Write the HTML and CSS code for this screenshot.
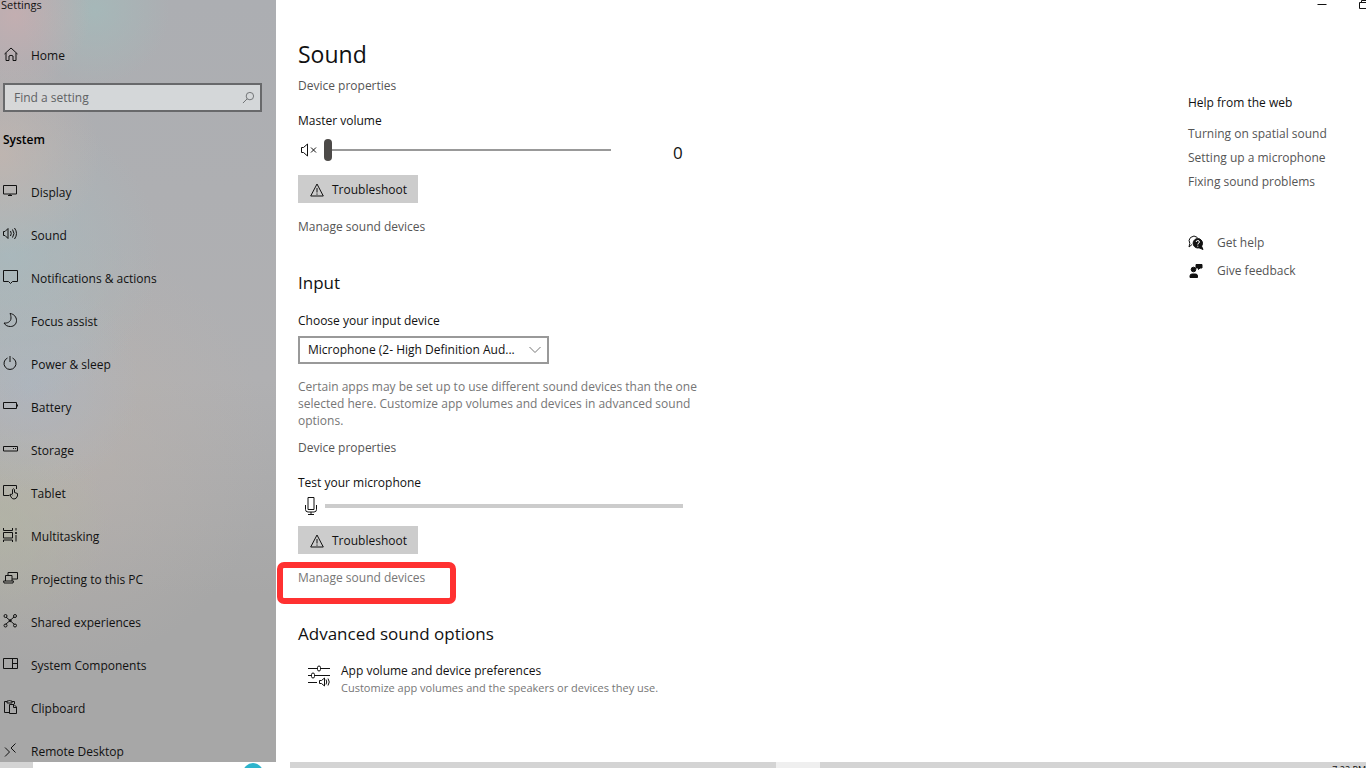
FILE: index.html
```
<!doctype html>
<html lang="en">
<head>
<meta charset="utf-8">
<meta name="viewport" content="width=device-width, initial-scale=1">
<title>Settings</title>
<link rel="stylesheet" href="styles.css">
</head>

<body>
<div class="window">
	<div class="sidebar">
		<div class="app-title">Settings</div>
		<a class="nav-item home" href="#">
			<svg class="icon" viewBox="0 0 16 16"><path d="M2.500 8 9 2l6.500 6M4 7v7.500h3V10q2-1.500 4 0v4.500h3V7"/></svg>
			Home
		</a>
		<div class="search">
			<input type="text" id="search" placeholder="Find a setting" aria-label="Find a setting">
			<svg class="search-icon" viewBox="0 0 14 14"><circle cx="8.500" cy="5.500" r="4"/><path d="M5.500 8.500 1 13"/></svg>
		</div>
		<h2 class="group">System</h2>
		<nav>
			<a class="nav-item" href="#">
				<svg class="icon" viewBox="0 0 16 16"><path d="M1.500 2.500h13v8.500h-13zM8 11v2M6 12.500h4"/></svg>
				Display
			</a>
			<a class="nav-item" href="#">
				<svg class="icon" viewBox="0 0 16 16"><path d="M1.500 5.500H3L6 2.500v10L3 9.500H1.500zM8.500 5q1.500 2.500 0 5M10.500 3.500q3 4 0 8M12.500 2q4 5.500 0 11"/></svg>
				Sound
			</a>
			<a class="nav-item" href="#">
				<svg class="icon" viewBox="0 0 16 16"><path d="M1.500 1.500h14v11h-5L8.500 14.500l-2-2h-5z"/></svg>
				Notifications &amp; actions
			</a>
			<a class="nav-item" href="#">
				<svg class="icon" viewBox="0 0 16 16"><path d="M8 1.500C12 2 14.500 5 14.500 8.500c0 3.500-2.500 6-6 6-3 0-5-1-6.500-3.500 3 .5 7-1 7-5 0-2-.5-3.500-1-4.500z"/></svg>
				Focus assist
			</a>
			<a class="nav-item" href="#">
				<svg class="icon" viewBox="0 0 16 16"><path d="M8 1v6M5.500 3a6 6 0 1 0 5 0"/></svg>
				Power &amp; sleep
			</a>
			<a class="nav-item" href="#">
				<svg class="icon" viewBox="0 0 16 16"><path d="M1.500 4.500h13v6h-13zM15.500 6.500v2"/></svg>
				Battery
			</a>
			<a class="nav-item" href="#">
				<svg class="icon" viewBox="0 0 16 16"><path d="M1.500 5.500h14v4.500h-14zM11 7.500h1M13 7.500h1"/></svg>
				Storage
			</a>
			<a class="nav-item" href="#">
				<svg class="icon" viewBox="0 0 16 16"><path d="M7.500 11.500h-6v-10h13V5M10.500 10V5.500q1-1.500 2 0V8.500l3 1v2.500q-1 3-3.500 3-2 0-3-2L8 10.500q1-1 2.500.5"/></svg>
				Tablet
			</a>
			<a class="nav-item" href="#">
				<svg class="icon" viewBox="0 0 16 16"><path d="M1.500 1v2.500h9V1M1.500 5.500h9v5.500h-9zM1.500 15v-2h9v2M14 1v2.500M14 8v6.500"/><path class="solid" d="M13.500 5.500h1v1h-1z"/></svg>
				Multitasking
			</a>
			<a class="nav-item" href="#">
				<svg class="icon" viewBox="0 0 16 16"><path d="M6 5.500v-3h9.500V9H10M3.500 11V5.500H10V11M1.500 11h10l-.5 2h-9z"/></svg>
				Projecting to this PC
			</a>
			<a class="nav-item" href="#">
				<svg class="icon" viewBox="0 0 16 16"><path d="m4 4 8.500 7.500M12 4l-8.500 7.500"/><circle cx="3.500" cy="3" r="1.500"/><circle cx="13" cy="3" r="1.500"/><circle cx="3.500" cy="12.500" r="1.500"/><circle cx="13" cy="12.500" r="1.500"/><circle class="solid" cx="8.200" cy="7.700" r="1"/></svg>
				Shared experiences
			</a>
			<a class="nav-item" href="#">
				<svg class="icon" viewBox="0 0 16 16"><path d="M1.500 2.500h14v10h-14zM10.500 2.500v10M10.500 7.500h5"/></svg>
				System Components
			</a>
			<a class="nav-item" href="#">
				<svg class="icon" viewBox="0 0 16 16"><path d="M7 13.500H2.500v-11H5M10 2.500h2.500V5M5 4V2h1.500q1-2 2 0H10v2zM7.500 5.500H12l2.500 2.500v6.500h-7zM11.500 5.500v3h3"/></svg>
				Clipboard
			</a>
			<a class="nav-item" href="#">
				<svg class="icon" viewBox="0 0 16 16"><path d="m3 5.500 4.500 4.500L3 14.500M13.500 1.500 9 6l4.500 4.500"/></svg>
				Remote Desktop
			</a>
		</nav>
	</div>

	<main class="content">
		<h1>Sound</h1>
		<a class="link" href="#">Device properties</a>

		<label class="field-label" for="volume">Master volume</label>
		<div class="volume">
			<svg class="volume-icon" viewBox="0 0 18 16"><path d="M1.500 5.500h2L7.500 2v12l-4-3.500h-2zM11 5.500l5 5M16 5.500l-5 5"/></svg>
			<input type="range" id="volume" min="0" max="100" value="0">
			<output for="volume">0</output>
		</div>
		<button type="button" class="btn">
			<svg class="warn" viewBox="0 0 14 14"><path d="M7 1 13.300 13H.7zM7 5v4.500M7 10.500v1.200"/></svg>
			Troubleshoot
		</button>
		<a class="link manage" href="#">Manage sound devices</a>

		<h2>Input</h2>
		<label class="field-label" for="device">Choose your input device</label>
		<div class="select">
			<select id="device">
				<option>Microphone (2- High Definition Aud...</option>
			</select>
			<svg class="chevron" viewBox="0 0 12 8"><path d="m.5 1 5.500 5.500L11.500 1"/></svg>
		</div>
		<p class="hint">Certain apps may be set up to use different sound devices than the one selected here. Customize app volumes and devices in advanced sound options.</p>
		<a class="link" href="#">Device properties</a>

		<div class="field-label">Test your microphone</div>
		<div class="mic">
			<svg class="mic-icon" viewBox="0 0 14 20"><path d="M4 1.500h6v12H4zM1.500 9v4.500q0 2.500 2.500 2.500h6q2.500 0 2.500-2.500V9M7 16v2.500M4 18.500h6"/></svg>
			<div class="level"></div>
		</div>
		<button type="button" class="btn">
			<svg class="warn" viewBox="0 0 14 14"><path d="M7 1 13.300 13H.7zM7 5v4.500M7 10.500v1.200"/></svg>
			Troubleshoot
		</button>
		<a class="link manage marked" href="#">Manage sound devices</a>

		<h2>Advanced sound options</h2>
		<a class="option" href="#">
			<svg class="option-icon" viewBox="0 0 22 22"><path d="M0 3.500h9M13 3.500h9M0 10.500h3M7 10.500h15M0 17.500h9M11.500 15.500h2l3-2.500v8l-3-2.500h-2zM18 14.500q1.500 2.500 0 5M20 13.500q2.500 3.500 0 7"/><rect x="9.500" y="1" width="3" height="5" rx="1.500"/><rect x="3.500" y="8" width="3" height="5" rx="1.500"/></svg>
			<span>
				App volume and device preferences
				<small>Customize app volumes and the speakers or devices they use.</small>
			</span>
		</a>
	</main>

	<aside class="help">
		<h3>Help from the web</h3>
		<a class="link" href="#">Turning on spatial sound</a>
		<a class="link" href="#">Setting up a microphone</a>
		<a class="link" href="#">Fixing sound problems</a>
		<div class="support">
			<a class="link" href="#">
				<svg class="help-icon" viewBox="0 0 16 16"><path d="M4 9.500 1 12l.8-3.500Q0 5 2.500 2.500 6-.5 9.500 2.500"/><circle class="solid" cx="9.800" cy="8.300" r="4.700"/><path class="solid" d="m13 10 2 4.500-4.500-2z"/><path class="mark" d="M8.200 7q0-1.500 1.600-1.500T11.400 7q0 1-1.600 1.800v.7M9.800 10.700v1"/></svg>
				Get help
			</a>
			<a class="link" href="#">
				<svg class="help-icon" viewBox="0 0 16 16"><circle class="solid" cx="5.500" cy="6.500" r="2.300"/><path class="solid" d="M2 14.500V13q0-2 2-2h3.500q2 0 2 2v1.500zM8 1.500h6v3.500h-2l-1.500 1.500V5H8z"/></svg>
				Give feedback
			</a>
		</div>
	</aside>

	<div class="caption">
		<button type="button" aria-label="Minimize"><svg viewBox="0 0 10 10"><path d="M.5 4.500h9"/></svg></button>
		<button type="button" aria-label="Restore"><svg viewBox="0 0 10 10"><path d="M.5 2.500h7v6h-7zM2.500 2.500v-2h7v6h-2"/></svg></button>
	</div>
</div>

<div class="taskbar">
	<div class="task-search">
		<svg class="orb" viewBox="0 0 20 20"><circle cx="10" cy="10" r="10"/></svg>
	</div>
	<div class="task-active"></div>
	<div class="clock">7:22 PM</div>
</div>
</body>
</html>
```
FILE: styles.css
```
*{
	box-sizing:border-box;
	}
body{
	margin:0;
	height:100vh;
	overflow:hidden;
	display:flex;
	flex-direction:column;
	background-color:#fff;
	color:#111;
	font-family:"Open Sans", "Segoe UI", sans-serif;
	font-size:12px;
	line-height:16px;
	}
a{
	color:inherit;
	text-decoration:none;
	}
h1, h2, h3, p{
	margin:0;
	font-weight:400;
	}
svg{
	display:block;
	flex:none;
	fill:none;
	stroke:#111;
	}
svg .solid{
	fill:#111;
	}
.window{
	flex:1;
	min-height:0;
	position:relative;
	display:flex;
	overflow:hidden;
	}

/* sidebar */
.sidebar{
	width:276px;
	flex:none;
	overflow:hidden;
	background-color:#a7a7a7;
	background-image:
		radial-gradient(circle at 15px 15px, rgba(204,174,176,.7), transparent 75px),
		radial-gradient(circle at 95px 10px, rgba(164,186,186,.8), transparent 75px),
		radial-gradient(circle at 0 155px, rgba(198,182,174,.7), transparent 100px),
		radial-gradient(circle at 10px 255px, rgba(168,186,190,.8), transparent 150px),
		radial-gradient(circle at 30px 385px, rgba(172,182,194,.7), transparent 110px),
		radial-gradient(circle at 0 525px, rgba(178,182,162,.6), transparent 110px),
		radial-gradient(circle at 50px 450px, rgba(186,178,172,.7), transparent 220px),
		linear-gradient(#acaeb2, #b0b0b2 50%, #a7a7a7 78%);
	}
.app-title{
	padding-left:1px;
	font-size:11px;
	line-height:10px;
	}
.nav-item{
	height:43px;
	display:flex;
	align-items:center;
	gap:13px;
	padding-left:2px;
	}
.home{
	margin-top:24px;
	}
.icon{
	width:16px;
	height:16px;
	margin-bottom:3px;
	}
.search{
	position:relative;
	margin:6px 14px 0 3px;
	}
.search input{
	display:block;
	width:100%;
	height:29px;
	padding:0 30px 0 9px;
	border:2px solid #68696b;
	border-radius:0;
	background-color:rgba(226,228,230,.75);
	font:inherit;
	outline:0;
	}
.search input::placeholder{
	color:#606264;
	}
.search-icon{
	position:absolute;
	top:8px;
	right:7px;
	width:13px;
	height:13px;
	stroke:#6a6c6e;
	}
.group{
	margin:18px 0 21px 3px;
	font-size:12px;
	font-weight:600;
	line-height:20px;
	color:#000;
	}

/* main column */
.content{
	flex:1;
	max-width:450px;
	padding:38px 0 0 22px;
	}
h1{
	font-size:23px;
	line-height:32px;
	}
.link{
	display:block;
	color:#555;
	}
h1 + .link{
	margin-top:8px;
	}
.field-label{
	display:block;
	margin-top:19px;
	}
.volume{
	display:flex;
	align-items:center;
	height:30px;
	margin-top:6px;
	}
.volume-icon{
	width:18px;
	height:16px;
	margin:0 6px 0 2px;
	}
.volume input{
	-webkit-appearance:none;
	appearance:none;
	width:287px;
	height:22px;
	margin:0;
	background:linear-gradient(#999, #999) center / 100% 2px no-repeat;
	}
.volume input::-webkit-slider-thumb{
	-webkit-appearance:none;
	width:8px;
	height:22px;
	border-radius:4px;
	background-color:#4c4a48;
	}
.volume output{
	margin-left:62px;
	padding-top:6px;
	font-size:17px;
	line-height:24px;
	}
.btn{
	display:flex;
	align-items:center;
	gap:8px;
	width:120px;
	height:28px;
	margin-top:10px;
	padding:1px 12px 0;
	border:none;
	background-color:#ccc;
	color:#111;
	font:inherit;
	}
.warn{
	width:14px;
	height:14px;
	}
.manage{
	margin-top:16px;
	}
.content h2{
	margin-top:36px;
	font-size:17px;
	line-height:24px;
	}
.content h2 + .field-label{
	margin-top:18px;
	}
.select{
	position:relative;
	width:251px;
	margin-top:7px;
	}
.select select{
	-webkit-appearance:none;
	appearance:none;
	display:block;
	width:100%;
	height:28px;
	padding:0 26px 0 8px;
	border:2px solid #999;
	border-radius:0;
	background-color:#fff;
	color:#111;
	font:inherit;
	}
.chevron{
	position:absolute;
	top:10px;
	right:8px;
	width:12px;
	height:8px;
	stroke:#777;
	pointer-events:none;
	}
.hint{
	margin:14px 0 11px;
	line-height:17px;
	color:#767676;
	}
.mic{
	display:flex;
	align-items:center;
	gap:7px;
	height:20px;
	margin-top:5px;
	padding-left:6px;
	}
.mic-icon{
	width:14px;
	height:20px;
	}
.level{
	width:358px;
	height:4px;
	background-color:#ccc;
	}
.marked{
	position:relative;
	width:158px;
	color:#767676;
	}
.marked::after{
	content:"";
	position:absolute;
	inset:-8px 0 -18px -21px;
	border:6px solid #ff3131;
	border-radius:7px;
	}
.option{
	display:flex;
	gap:11px;
	margin-top:17px;
	padding-left:10px;
	}
.option-icon{
	width:22px;
	height:22px;
	margin-top:2px;
	}
.option small{
	display:block;
	font-size:11px;
	line-height:18px;
	color:#767676;
	}

/* help column */
.help{
	width:178px;
	margin-left:auto;
	padding-top:95px;
	}
.help h3{
	margin-bottom:15px;
	font-size:12px;
	}
.help > .link{
	margin-bottom:8px;
	}
.support{
	margin-top:45px;
	}
.support .link{
	display:flex;
	align-items:center;
	gap:13px;
	margin-bottom:12px;
	}
.help-icon{
	width:16px;
	height:16px;
	}
.help-icon .mark{
	stroke:#fff;
	}

/* window buttons */
.caption{
	position:absolute;
	top:0;
	right:-3px;
	display:flex;
	gap:32px;
	}
.caption button{
	width:10px;
	height:10px;
	padding:0;
	border:none;
	background:none;
	}

/* taskbar */
.taskbar{
	flex:none;
	height:6px;
	display:flex;
	overflow:hidden;
	background-color:#d4d4d4;
	}
.task-search{
	width:257px;
	margin-left:33px;
	padding-left:210px;
	background-color:#fff;
	}
.orb{
	width:20px;
	height:20px;
	margin-top:1px;
	fill:#2db4cc;
	stroke:none;
	}
.task-active{
	width:44px;
	margin-left:486px;
	background-color:#efefef;
	}
.clock{
	margin-left:auto;
	font-size:9px;
	}
```
